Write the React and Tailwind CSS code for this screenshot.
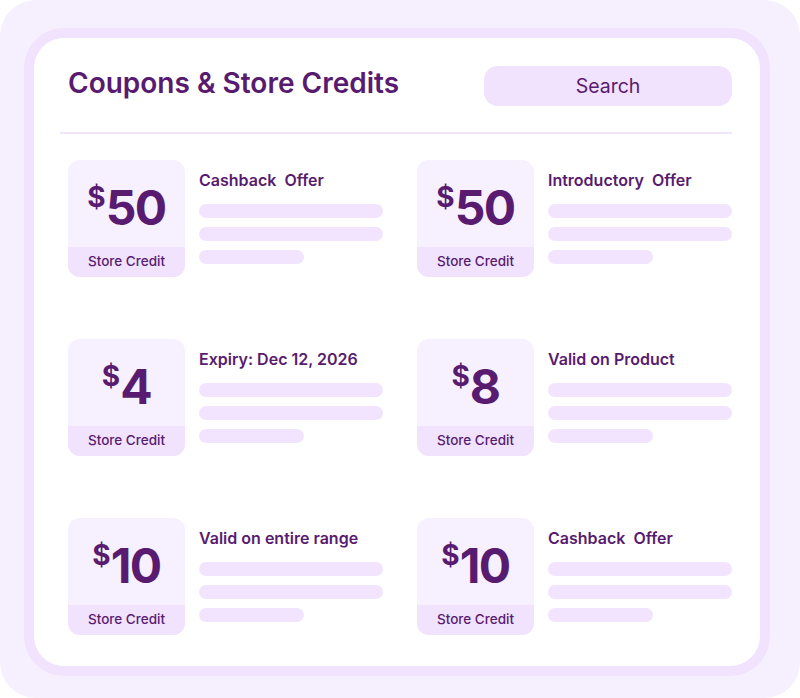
import React from "react";

const items = [
  { amount: "50", title: "Cashback  Offer" },
  { amount: "50", title: "Introductory  Offer" },
  { amount: "4", title: "Expiry: Dec 12, 2026" },
  { amount: "8", title: "Valid on Product" },
  { amount: "10", title: "Valid on entire range" },
  { amount: "10", title: "Cashback  Offer" },
];

function Card({ amount, title }) {
  return (
    <div className="flex gap-[14px]">
      <div className="w-[117px] h-[117px] shrink-0 rounded-[12px] bg-[#f7f0ff] overflow-hidden flex flex-col">
        <div className="flex-1 flex items-start justify-center pt-[24px]">
          <span className="text-[28px] font-bold leading-none -mt-[1px]">$</span>
          <span className="text-[48px] font-bold leading-none tracking-[-1.5px]">{amount}</span>
        </div>
        <div className="h-[30px] bg-[#f1e2fd] flex items-center justify-center text-[13.5px] font-medium pb-[1px]">
          Store Credit
        </div>
      </div>
      <div className="flex-1 flex flex-col pt-[10px]">
        <div className="text-[16px] font-semibold leading-[20px] whitespace-pre">{title}</div>
        <div className="mt-[14px] h-[14px] rounded-full bg-[#f2e4fe]" />
        <div className="mt-[9px] h-[14px] rounded-full bg-[#f2e4fe]" />
        <div className="mt-[9px] h-[14px] w-[105px] rounded-full bg-[#f2e4fe]" />
      </div>
    </div>
  );
}

export default function App() {
  return (
    <div
      className="w-[800px] h-[698px] bg-[#f6effe] rounded-[36px] pt-[28px] pl-[24px] pr-[30px] pb-[22px] text-[#581b70]"
      style={{ fontFamily: "Inter, 'Noto Sans', sans-serif" }}
    >
      <div className="h-full rounded-[40px] bg-[#f1e2fd] p-[10px]">
        <div className="h-full rounded-[30px] bg-white pt-[28px] pl-[26px] pr-[28px]">
          <div className="flex items-center justify-between pl-[8px] h-[40px]">
            <div className="text-[28px] font-semibold leading-none -mt-[6px]">
              Coupons &amp; Store Credits
            </div>
            <div className="w-[248px] h-[40px] rounded-[14px] bg-[#f1e2fd] flex items-center justify-center text-[19.5px] pt-[1px]">
              Search
            </div>
          </div>
          <div className="mt-[26px] h-[2px] bg-[#f1e4fd]" />
          <div className="mt-[26px] pl-[8px] grid grid-cols-2 gap-x-[34px] gap-y-[62px]">
            {items.map((it, i) => (
              <Card key={i} {...it} />
            ))}
          </div>
        </div>
      </div>
    </div>
  );
}
